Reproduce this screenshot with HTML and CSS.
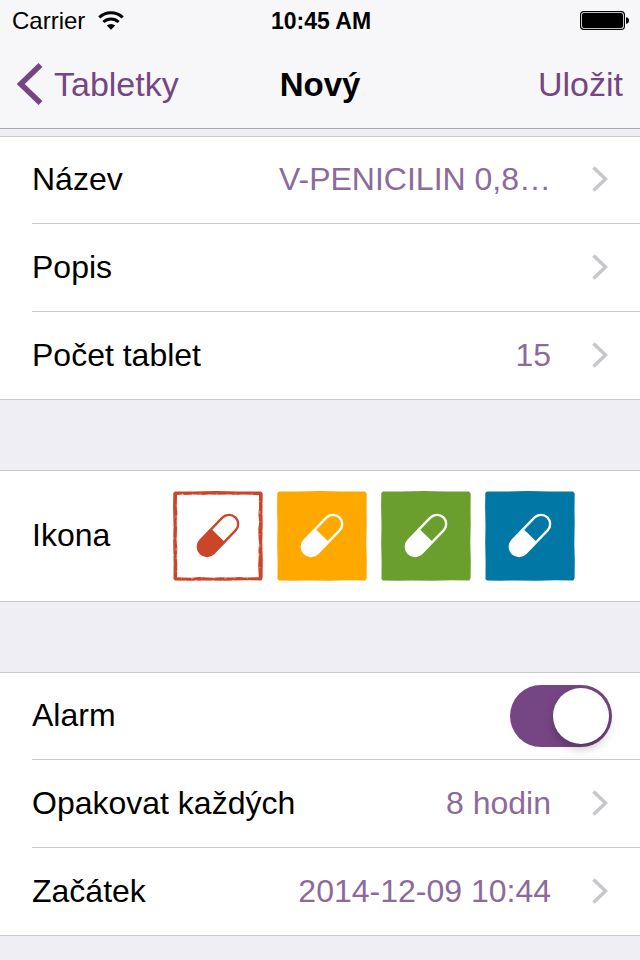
FILE: index.html
```html
<!DOCTYPE html>
<html lang="cs">
<head>
<meta charset="utf-8">
<meta name="viewport" content="width=device-width, initial-scale=1">
<title>Nový</title>
<link rel="stylesheet" href="styles.css">
</head>
<body>
<svg class="defs" aria-hidden="true">
  <symbol id="chevron" viewBox="0 0 16 26"><path d="M1.5 1.5 13.5 13 1.5 24.5" fill="none" stroke="currentColor" stroke-width="3.6"/></symbol>
  <symbol id="pill" viewBox="0 0 90 90">
    <g transform="translate(45 44.4) rotate(-46)">
      <rect x="-25" y="-9.2" width="50" height="18.4" rx="9.2" fill="none" stroke="currentColor" stroke-width="2.4"/>
      <path d="M0-9.5V9.5H-16A9.5 9.5 0 0 1-16-9.5Z" fill="currentColor"/>
    </g>
  </symbol>
  <symbol id="tile" viewBox="0 0 90 90">
    <path fill="currentColor" d="M2 .4 20 .6 43 .1 65 .4 88 .6 89.7 2.5 89.5 20 89.7 32 89.3 52 89.8 70 89.6 87 88.4 89.4 70 89.2 52 89.7 31 89.4 16 89.7 2 89.4.5 88 .6 70 .2 52 .5 34 .1 16 .3 2Z"/>
  </symbol>
</svg>

<header class="top">
  <div class="status">
    <div class="carrier">
      <span>Carrier</span>
      <svg width="26" height="20" viewBox="0 0 26 20" aria-hidden="true">
        <g fill="none" stroke="#000" stroke-width="3">
          <path d="M1.3 6.4A17 17 0 0 1 24.7 6.4"/>
          <path d="M5.4 11A11 11 0 0 1 20.6 11"/>
        </g>
        <path d="M8.8 14.6A6.4 6.4 0 0 1 17.2 14.6L13 18.8Z"/>
      </svg>
    </div>
    <time class="clock">10:45 AM</time>
    <svg class="battery" width="50" height="20" viewBox="0 0 50 20" aria-hidden="true">
      <rect x=".6" y=".6" width="43.8" height="17.8" rx="3.2" fill="#fff" stroke="#000" stroke-width="1.2"/>
      <rect x="2" y="2" width="41" height="15" rx="2"/>
      <path d="M46 6.2Q49 6.6 49 9.5T46 12.8Z"/>
    </svg>
  </div>
  <nav class="bar">
    <a class="back" href="#tabletky">
      <svg width="26" height="42" viewBox="0 0 26 42" aria-hidden="true"><path d="M23.5 2 3.7 21 23.5 40" fill="none" stroke="currentColor" stroke-width="5.6"/></svg>
      <span>Tabletky</span>
    </a>
    <h1 class="title">Nový</h1>
    <button class="save" type="submit" form="med">Uložit</button>
  </nav>
</header>

<form class="form" id="med">
  <div class="group">
    <button class="row" type="button"><span class="label">Název</span><span class="value">V-PENICILIN 0,8…</span><svg class="chev" aria-hidden="true"><use href="#chevron"/></svg></button>
    <button class="row" type="button"><span class="label">Popis</span><span class="value"></span><svg class="chev" aria-hidden="true"><use href="#chevron"/></svg></button>
    <button class="row" type="button"><span class="label">Počet tablet</span><span class="value">15</span><svg class="chev" aria-hidden="true"><use href="#chevron"/></svg></button>
  </div>

  <div class="group">
    <div class="row icons" role="radiogroup" aria-labelledby="ikona">
      <span class="label" id="ikona">Ikona</span>
      <div class="choices">
        <label class="choice red"><input type="radio" name="icon" aria-label="1" checked>
          <svg viewBox="0 0 90 90" aria-hidden="true">
            <use href="#tile"/>
            <path fill="#fff" d="M4 4 10 3.5 12 4 22 3.4 30 3.9 36 3.4 45 3.8 58 3.5 62 4.1 70 3.6 86 4 86 17 85.4 24 86.2 31 85.3 38 85.6 48 86.2 52 85.4 60 85.8 64 85.2 74 85.8 86.2 72 86.5 66 85.9 59 86.6 47 86.2 40 86.8 26 86.1 18 86.7 4 86.2 4.3 74 3.7 65 4.3 58 3.6 49 4 38 3.7 30 4.4 22 3.8 16Z"/>
            <g fill="none" stroke="#fff" stroke-opacity=".6">
              <path stroke-width=".6" stroke-dasharray="2 9 1 6 3 14" d="M8 3.1H86"/>
              <path stroke-width=".7" stroke-dasharray="1 9 3 7 1 12" d="M8 87.2H84M86.8 10V84M3.1 14V84"/>
              <path stroke-width=".7" stroke-dasharray="1 9 2 15 2 8" d="M.4 36V82M89.6 12V60M12 89.5H80"/>
            </g>
            <use href="#pill"/>
          </svg></label>
        <label class="choice amber"><input type="radio" name="icon" aria-label="2"><svg viewBox="0 0 90 90" aria-hidden="true"><use href="#tile"/><use class="white" href="#pill"/></svg></label>
        <label class="choice green"><input type="radio" name="icon" aria-label="3"><svg viewBox="0 0 90 90" aria-hidden="true"><use href="#tile"/><use class="white" href="#pill"/></svg></label>
        <label class="choice blue"><input type="radio" name="icon" aria-label="4"><svg viewBox="0 0 90 90" aria-hidden="true"><use href="#tile"/><use class="white" href="#pill"/></svg></label>
      </div>
    </div>
  </div>

  <div class="group">
    <div class="row alarm"><label class="label" for="alarm">Alarm</label><input class="switch" id="alarm" type="checkbox" role="switch" checked></div>
    <button class="row" type="button"><span class="label">Opakovat každých</span><span class="value">8 hodin</span><svg class="chev" aria-hidden="true"><use href="#chevron"/></svg></button>
    <button class="row" type="button"><span class="label">Začátek</span><span class="value">2014-12-09 10:44</span><svg class="chev" aria-hidden="true"><use href="#chevron"/></svg></button>
  </div>
</form>
</body>
</html>
```
FILE: styles.css
```css
* {
  box-sizing: border-box;
}

body {
  margin: 0;
  background: #efeef4;
  color: #000;
  font-family: "Liberation Sans", Arial, sans-serif;
  font-size: 32px;
  line-height: 40px;
}

button {
  margin: 0;
  padding: 0;
  border: 0;
  background: none;
  color: inherit;
  font: inherit;
  text-align: left;
}

.defs {
  position: absolute;
  width: 0;
  height: 0;
}

.top {
  background: #f7f7f9;
  border-bottom: 1px solid #a9a8ae;
}

.status {
  display: grid;
  grid-template-columns: 1fr auto 1fr;
  align-items: center;
  height: 40px;
  padding: 1px 10px 0 12px;
  font-size: 24px;
}

.carrier {
  display: flex;
  align-items: center;
  gap: 13px;
}

.clock {
  font-size: 23px;
  font-weight: bold;
}

.battery {
  justify-self: end;
}

.bar {
  display: grid;
  grid-template-columns: 1fr auto 1fr;
  align-items: center;
  height: 88px;
  padding: 0 17px;
  font-size: 34px;
}

.back {
  display: flex;
  align-items: center;
  gap: 11px;
  color: #764684;
  text-decoration: none;
}

.title {
  margin: 0;
  padding-top: 2px;
  font-size: 33px;
  font-weight: bold;
}

.save {
  justify-self: end;
  color: #764684;
}

.form {
  display: flex;
  flex-direction: column;
  gap: 70px;
  padding: 7px 0 24px;
}

.group {
  padding-left: 32px;
  background: #fff;
  border: solid #c8c7cc;
  border-width: 1px 0;
}

.row {
  display: flex;
  align-items: center;
  width: 100%;
  min-height: 88px;
  padding-right: 32px;
  border-top: 1px solid #c8c7cc;
}

.row:first-child {
  min-height: 86px;
  border-top: 0;
}

.label,
.value {
  padding-bottom: 2px;
}

.value {
  flex: 1;
  color: #8c6a9b;
  text-align: right;
  white-space: nowrap;
}

.chev {
  width: 16px;
  height: 26px;
  margin: 0 0 2px 41px;
  color: #c7c7cc;
}

.icons {
  padding: 20px 65px 20px 0;
  justify-content: space-between;
}

.choices {
  display: flex;
  gap: 14px;
}

.choice {
  position: relative;
  width: 90px;
  height: 90px;
}

.choice input {
  position: absolute;
  inset: 0;
  width: 100%;
  height: 100%;
  margin: 0;
  opacity: 0;
}

.choice svg {
  display: block;
}

.red { color: #cb4529; }
.amber { color: #ffa900; }
.green { color: #6a9f2e; }
.blue { color: #0077a4; }
.white { color: #fff; }

.alarm {
  justify-content: space-between;
  padding-right: 28px;
}

.switch {
  appearance: none;
  display: flex;
  justify-content: flex-end;
  width: 102px;
  height: 62px;
  margin: 0;
  padding: 3px;
  border-radius: 31px;
  background: #764684;
}

.switch::before {
  content: "";
  width: 56px;
  height: 56px;
  border-radius: 50%;
  background: #fff;
  box-shadow: 0 5px 10px rgba(0, 0, 0, 0.24);
}

.switch:not(:checked) {
  justify-content: flex-start;
  background: #e5e5ea;
}
```
